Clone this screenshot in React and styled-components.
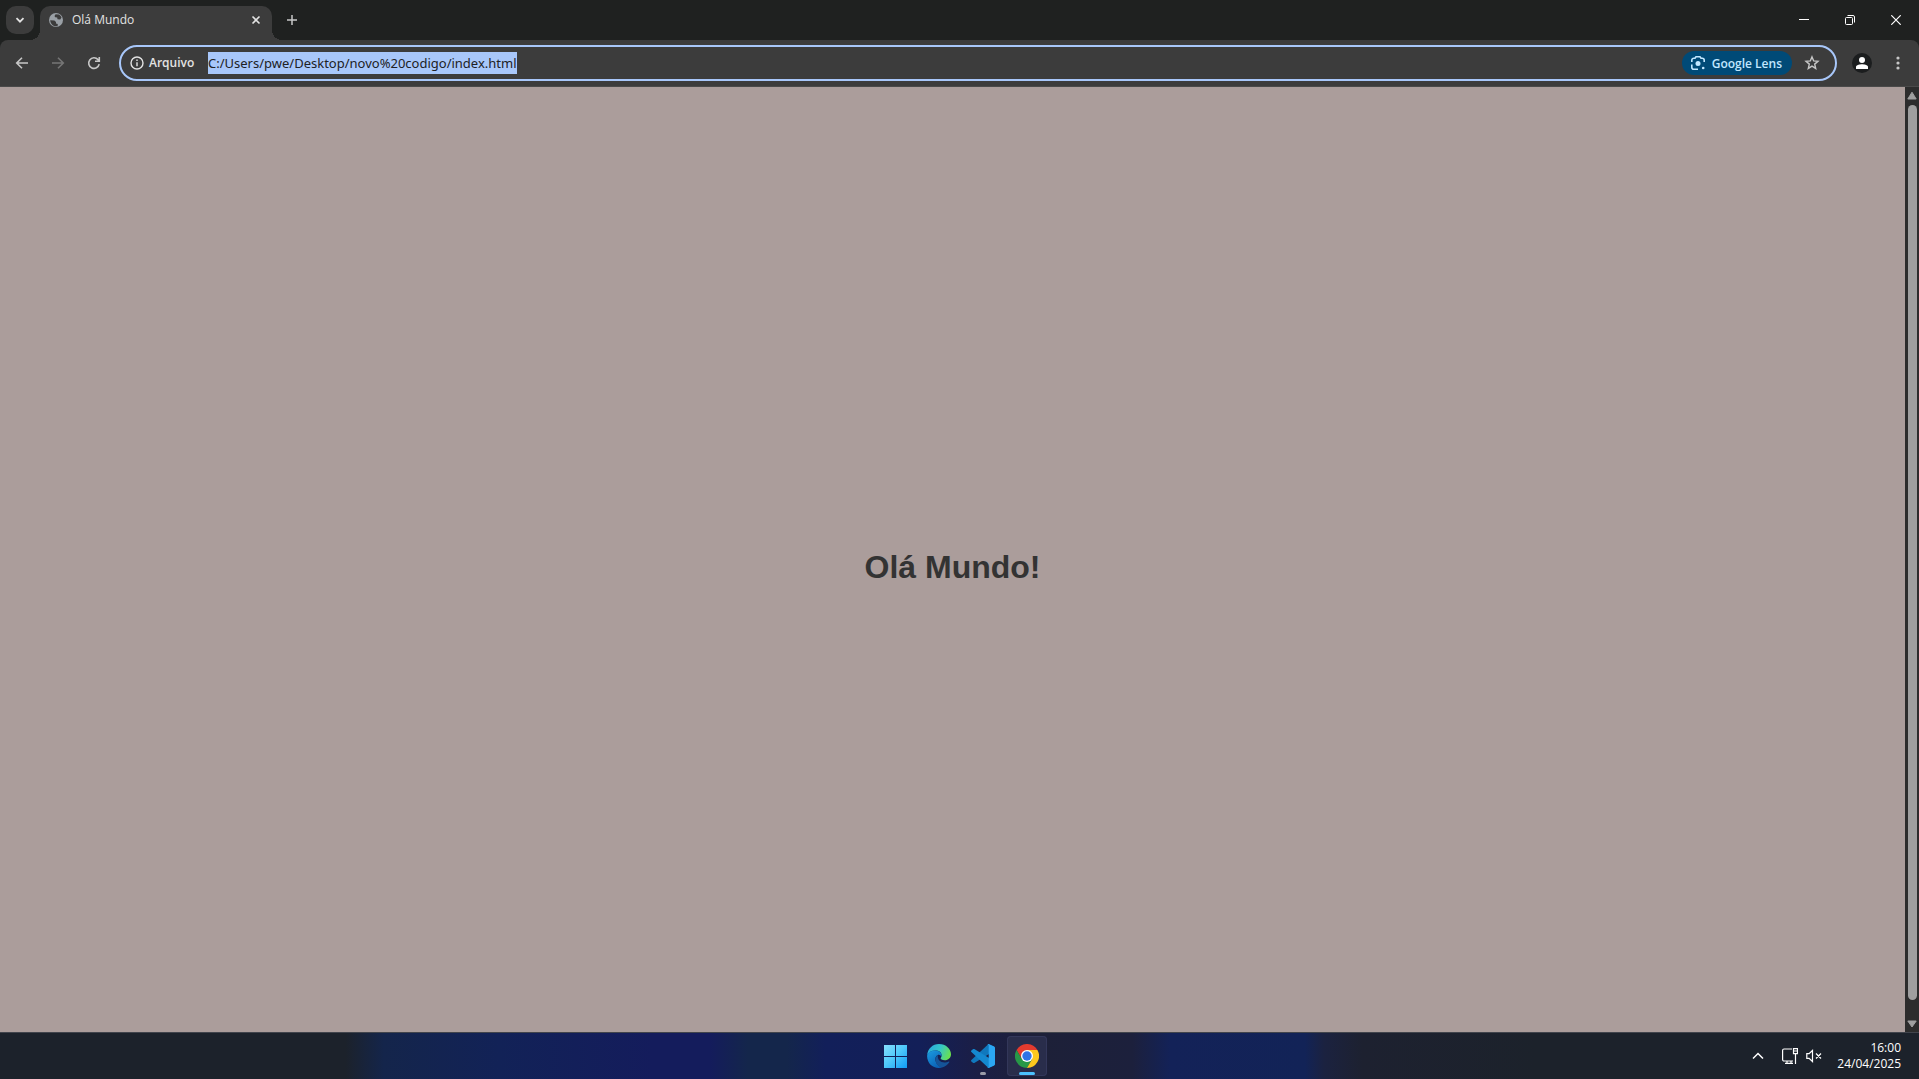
import React from "react";
import styled, { createGlobalStyle } from "styled-components";

const Global = createGlobalStyle`
  *, *::before, *::after { box-sizing: border-box; }
  html, body, #root { height: 100%; margin: 0; }
  body { background: #1f2120; overflow: hidden; font-family: "Open Sans", "Noto Sans", sans-serif; }
  button, input { font: inherit; color: inherit; margin: 0; padding: 0; border: 0; background: none; }
`;

const Desktop = styled.div`
  display: flex;
  flex-direction: column;
  height: 100vh;
`;

const TabStrip = styled.header`
  display: flex;
  align-items: flex-end;
  height: 40px;
  padding-left: 6px;
  background: #1f2120;
  color: #e3e3e3;
`;

const TabSearch = styled.button`
  display: grid;
  place-items: center;
  width: 28px;
  height: 28px;
  margin: 0 6px 6px 0;
  border-radius: 10px;
  background: #3c3c3c;
`;

const Tab = styled.div`
  position: relative;
  display: flex;
  align-items: center;
  width: 232px;
  height: 34px;
  padding: 0 8px 6px;
  border-radius: 10px 10px 0 0;
  background: #3c3c3c;

  &::before, &::after {
    content: "";
    position: absolute;
    bottom: 0;
    width: 10px;
    height: 10px;
  }
  &::before { left: -10px; background: radial-gradient(circle at 0 0, transparent 10px, #3c3c3c 10px); }
  &::after { right: -10px; background: radial-gradient(circle at 100% 0, transparent 10px, #3c3c3c 10px); }
`;

const TabTitle = styled.span`
  flex: 1;
  padding-left: 8px;
  font-size: 12px;
  line-height: 18px;
`;

const IconButton = styled.button`
  display: grid;
  place-items: center;
  flex: none;
  width: 28px;
  height: 28px;
  color: ${(p) => p.$color || "#c7c7c7"};
`;

const TabClose = styled(IconButton)`
  width: 16px;
  height: 16px;
  color: #e3e3e3;
`;

const NewTab = styled(IconButton)`
  margin: 0 0 6px 6px;
`;

const WindowControls = styled.div`
  display: flex;
  align-self: stretch;
  margin-left: auto;
`;

const WindowButton = styled.button`
  display: grid;
  place-items: center;
  width: 46px;
  height: 40px;
  color: #fff;
`;

const ToolbarBack = styled.div`
  background: #1f2120;
`;

const Toolbar = styled.nav`
  display: flex;
  align-items: center;
  height: 47px;
  padding: 0 7px 0 8px;
  border-bottom: 1px solid #4a4a4a;
  border-radius: 8px 8px 0 0;
  background: #3c3c3c;
`;

const NavButtons = styled.div`
  display: flex;
  gap: 8px;
  margin-right: 11px;
`;

const AddressBar = styled.div`
  display: flex;
  align-items: center;
  flex: 1;
  height: 36px;
  padding: 0 9px 0 8px;
  border: 2px solid #a8c7fa;
  border-radius: 18px;
  color: #e3e3e3;
`;

const SchemeChip = styled.button`
  display: flex;
  align-items: center;
  gap: 4px;
  width: 79px;
  font-size: 12px;
  font-weight: 600;
  line-height: 18px;
`;

const Address = styled.input`
  field-sizing: content;
  height: 22px;
  outline: 0;
  background: #a8c7fa;
  color: #202124;
  font-family: "Noto Sans", "Open Sans", sans-serif;
  font-size: 13px;
`;

const LensButton = styled.button`
  display: flex;
  align-items: center;
  gap: 6px;
  height: 24px;
  margin-left: auto;
  padding: 0 10px 0 8px;
  border-radius: 12px;
  background: #004a77;
  color: #c2e7ff;
  font-size: 12px;
  font-weight: 600;
  white-space: nowrap;
`;

const Star = styled(IconButton)`
  margin-left: 6px;
`;

const Avatar = styled.button`
  display: grid;
  place-items: center;
  width: 20px;
  height: 20px;
  margin: 0 12px 0 15px;
  border-radius: 50%;
  background: #1b1d1e;
  color: #fff;
`;

const Viewport = styled.div`
  display: flex;
  flex: 1;
  min-height: 0;
`;

const Page = styled.main`
  display: grid;
  place-items: center;
  flex: 1;
  padding-top: 14px;
  background: #ab9d9b;
`;

const Greeting = styled.h1`
  margin: 0;
  color: #333;
  font: bold 32px/36px "Liberation Sans", Arial, sans-serif;
`;

const ScrollBar = styled.div`
  display: flex;
  flex-direction: column;
  align-items: center;
  width: 14px;
  background: #2c2c2c;
`;

const ScrollArrow = styled.button`
  display: grid;
  place-items: center;
  width: 14px;
  height: 18px;
  color: #9f9f9f;
`;

const ScrollThumb = styled.div`
  flex: 1;
  width: 9px;
  margin-bottom: 14px;
  border-radius: 5px;
  background: #9f9f9f;
`;

const Taskbar = styled.footer`
  display: grid;
  grid-template-columns: 1fr auto 1fr;
  align-items: center;
  height: 47px;
  padding-left: 2px;
  border-top: 1px solid #41444c;
  color: #fff;
  background: linear-gradient(90deg,
    #1c222b 0%, #1c222b 18%, #14254b 20%, #122257 26%, #141c5c 34%, #141c5c 37%,
    #14264b 39%, #14264b 41%, #121f5a 43%, #131f58 48%, #1b1e45 51%, #1d2038 54%, #1c203c 59%,
    #132258 61%, #122357 68%, #1b2240 69%, #1d2130 71%, #1c222b 80%, #1c222b 100%);
`;

const Apps = styled.div`
  display: flex;
  gap: 4px;
  grid-column: 2;
`;

const AppButton = styled.button`
  position: relative;
  display: grid;
  place-items: center;
  width: 40px;
  height: 40px;
  border-radius: 4px;
  background: ${(p) => (p.$active ? "#292d4b" : "none")};
  box-shadow: ${(p) => (p.$active ? "inset 0 0 0 1px #33375a" : "none")};

  &::after {
    content: "";
    position: absolute;
    bottom: 1px;
    width: ${(p) => (p.$active ? 16 : p.$running ? 6 : 0)}px;
    height: 3px;
    border-radius: 2px;
    background: ${(p) => (p.$active ? "#4cc2ff" : "#9a9ba8")};
  }
`;

const Tray = styled.div`
  display: flex;
  align-items: center;
  justify-self: end;
  padding-right: 18px;
`;

const TrayButton = styled.button`
  display: grid;
  place-items: center;
  width: ${(p) => p.$w || 24}px;
  height: 32px;
`;

const Clock = styled.time`
  width: 75px;
  font-size: 12px;
  line-height: 16px;
  text-align: right;
`;

const Svg = ({ w = 16, h = w, sw = 1.5, children }) => (
  <svg width={w} height={h} viewBox={`0 0 ${w} ${h}`} fill="none" stroke="currentColor" strokeWidth={sw} aria-hidden="true">
    {children}
  </svg>
);

const Globe = () => (
  <Svg w={16} sw={0}>
    <circle cx="8" cy="8" r="7" fill="#9aa0a6" />
    <path d="M2.2 8.2 6.4 8.4 8 10v1.6l1.8.4-.2 2.2C6 14.8 2.4 12.3 2.2 8.2zM7.6 2.2 11 2.5c1.2.8 2 1.8 2.5 3l-1.3 2-2.7-.2-.3-1.7-2-.3-.7-1.2z" fill="#3c3c3c" />
  </Svg>
);

const EdgeLogo = () => (
  <svg width="24" height="24" viewBox="0 0 24 24" aria-hidden="true">
    <defs>
      <linearGradient id="edgeTop" x1="0" y1="0.3" x2="1" y2="0.6">
        <stop offset="0" stopColor="#28a9dd" /><stop offset="0.5" stopColor="#35c6c8" /><stop offset="1" stopColor="#6be24b" />
      </linearGradient>
      <linearGradient id="edgeLow" x1="0" y1="0" x2="0.6" y2="1">
        <stop offset="0" stopColor="#1b9de2" /><stop offset="1" stopColor="#0b62b6" />
      </linearGradient>
    </defs>
    <path d="M.2 11C.8 4.7 5.5 0 12 0c7 0 12 5 12 10.2 0 3.6-2.8 6-6.2 6-2.8 0-4.2-.9-4.2-1.9 0-.7 1-1.2 1-2.9C14.6 8.5 12 6.6 8.5 6.6 4.5 6.6 1.5 8.6.2 11z" fill="url(#edgeTop)" />
    <path d="M.1 12C.3 8.7 3.7 6.4 8 6.4c4 0 6.6 2.2 6.6 5 0 .5-.1 1-.3 1.4-.5-1.5-1.7-2.4-3.1-2-2.3.7-3.3 3.5-2.7 6 .8 3.4 3.7 6 6.5 6.7C7.5 25.600.1 20.300.1 12z" fill="url(#edgeLow)" />
    <path d="M11 10.9c-2 .9-3 3.5-2.5 6 .8 3.3 3.6 6 6.5 6.6 3-.8 5.7-2.7 7.3-5.3.3-.5-.1-.8-.6-.6-1.2.6-2.5.8-3.9.8-4.7 0-7.7-3-6.8-7.500z" fill="#155498" />
  </svg>
);

const CodeLogo = () => (
  <svg width="24" height="24" viewBox="0 0 24 24" aria-hidden="true">
    <path d="M17.5 0 23 2.5V7L3.3 18.900c-.4.3-1 .3-1.4-.1L.4 17.4c-.5-.4-.5-1.1 0-1.500z" fill="#1078bd" />
    <path d="M17.5 24 23 21.500V17L3.3 5.100c-.4-.3-1-.3-1.4.1L.4 6.600c-.5.4-.5 1.100 0 1.500z" fill="#1488d0" />
    <path d="M17.5 24c-.6 0-1-.3-1.3-.6.7.5 1.5.1 1.5-.7V1.300c0-.8-.8-1.200-1.500-.7.3-.3.7-.6 1.300-.6l5.600 2.400c.6.3.9.800.9 1.400v16.400c0 .6-.3 1.100-.9 1.400z" fill="#2ba6f2" />
  </svg>
);

const ChromeLogo = () => (
  <svg width="24" height="24" viewBox="0 0 24 24" aria-hidden="true">
    <path d="M12 6h10.4A12 12 0 0 0 1.6 6l5.2 9z" fill="#e33b2e" />
    <path d="M6.8 15 1.6 6A12 12 0 0 0 12 24l5.2-9z" fill="#279847" />
    <path d="M17.2 15 12 24A12 12 0 0 0 22.4 6H12z" fill="#fcc81d" />
    <circle cx="12" cy="12" r="6" fill="#fff" />
    <circle cx="12" cy="12" r="4.7" fill="#2f73e6" />
  </svg>
);

const WindowsLogo = () => (
  <svg width="24" height="24" viewBox="0 0 24 24" aria-hidden="true">
    <defs>
      <linearGradient id="win" gradientUnits="userSpaceOnUse" x1="0" y1="0" x2="24" y2="24">
        <stop offset="0" stopColor="#8ce0fc" /><stop offset="0.5" stopColor="#4fc9fb" /><stop offset="1" stopColor="#109bf6" />
      </linearGradient>
    </defs>
    <path d="M1 1h11v11H1zM13 1h11v11H13zM1 13h11v11H1zM13 13h11v11H13z" fill="url(#win)" />
  </svg>
);

const BrowserTabs = () => (
  <TabStrip>
    <TabSearch aria-label="Pesquisar guias">
      <Svg w={10} sw={1.8}><path d="m1.5 3.2 3.5 3.5 3.5-3.5" /></Svg>
    </TabSearch>
    <Tab>
      <Globe />
      <TabTitle>Olá Mundo</TabTitle>
      <TabClose aria-label="Fechar guia"><Svg w={10} sw={1.6}><path d="m1.5 1.5 7 7m0-7-7 7" /></Svg></TabClose>
    </Tab>
    <NewTab aria-label="Nova guia"><Svg w={12} sw={1.5}><path d="M6 1v10M1 6h10" /></Svg></NewTab>
    <WindowControls>
      <WindowButton aria-label="Minimizar"><Svg w={10} sw={1}><path d="M0 4.5h10" /></Svg></WindowButton>
      <WindowButton aria-label="Restaurar">
        <Svg w={10} sw={1}><rect x=".5" y="2.5" width="7" height="7" rx="1" /><path d="M2.500.5H8A1.500 1.500 0 0 1 9.500 2v5.500" /></Svg>
      </WindowButton>
      <WindowButton aria-label="Fechar"><Svg w={10} sw={1.2}><path d="m.3.3 9.400 9.400m0-9.400L.3 9.700" /></Svg></WindowButton>
    </WindowControls>
  </TabStrip>
);

const BrowserToolbar = () => (
  <ToolbarBack>
    <Toolbar>
      <NavButtons>
        <IconButton aria-label="Voltar"><Svg sw={1.6}><path d="M14 8H3M8 2.7 2.7 8 8 13.3" /></Svg></IconButton>
        <IconButton $color="#757575" aria-label="Avançar"><Svg sw={1.6}><path d="M2 8h11M8 2.7 13.3 8 8 13.3" /></Svg></IconButton>
        <IconButton aria-label="Recarregar">
          <Svg sw={1.6}><path d="M13.2 9.2A5.3 5.3 0 1 1 12 4.6l1 1.200M13.3 2v4.300H9" /></Svg>
        </IconButton>
      </NavButtons>
      <AddressBar>
        <SchemeChip>
          <Svg sw={1.4}><circle cx="8" cy="8" r="6" /><path d="M8 7.200v4M8 4.600v1.500" /></Svg>
          Arquivo
        </SchemeChip>
        <Address aria-label="Endereço" defaultValue="C:/Users/pwe/Desktop/novo%20codigo/index.html" spellCheck={false} />
        <LensButton>
          <Svg sw={1.6}>
            <path d="M1.800 7V5.200a2 2 0 0 1 2-2h1.200l1-1.400h4l1 1.400h1.200a2 2 0 0 1 2 2V7M1.800 9.500v2.700a2 2 0 0 0 2 2H8" />
            <circle cx="8" cy="8.500" r="2.500" fill="currentColor" stroke="none" />
            <circle cx="13.200" cy="13" r="1.300" fill="currentColor" stroke="none" />
          </Svg>
          Google Lens
        </LensButton>
        <Star aria-label="Favoritos">
          <Svg sw={1.4}><path d="m8 1.900 1.700 4 4.300.4-3.300 2.800 1 4.300L8 11.100l-3.700 2.300 1-4.300L2 6.300l4.300-.4z" /></Svg>
        </Star>
      </AddressBar>
      <Avatar aria-label="Perfil">
        <Svg w={12} sw={0}><circle cx="6" cy="3" r="3" fill="currentColor" /><path d="M0 12V9.800C0 8 3.500 7.200 6 7.200s6 .8 6 2.600V12z" fill="currentColor" /></Svg>
      </Avatar>
      <IconButton aria-label="Menu">
        <Svg sw={0}><g fill="currentColor"><circle cx="8" cy="3" r="1.600" /><circle cx="8" cy="8" r="1.600" /><circle cx="8" cy="13" r="1.600" /></g></Svg>
      </IconButton>
    </Toolbar>
  </ToolbarBack>
);

const SystemTaskbar = () => (
  <Taskbar>
    <Apps>
      <AppButton aria-label="Iniciar"><WindowsLogo /></AppButton>
      <AppButton aria-label="Microsoft Edge"><EdgeLogo /></AppButton>
      <AppButton $running aria-label="Visual Studio Code"><CodeLogo /></AppButton>
      <AppButton $active aria-label="Google Chrome"><ChromeLogo /></AppButton>
    </Apps>
    <Tray>
      <TrayButton $w={40} aria-label="Ícones ocultos"><Svg w={12}><path d="M1 8.500 6 3.500l5 5" /></Svg></TrayButton>
      <TrayButton aria-label="Rede">
        <Svg w={16} sw={1.2}>
          <path d="M10 1H2A1.400 1.400 0 0 0 .6 2.400v9.200A1.400 1.400 0 0 0 2 13h9M5 13v2.300m4-2.300v2.300M3 15.400h8M11.500.6h4v5h-4zM11.500 3h4M13.500 5.600V16" />
        </Svg>
      </TrayButton>
      <TrayButton aria-label="Volume">
        <Svg w={16} sw={1.2}><path d="M.8 5.700h2.300L6.500 2.500v11L3.100 10.300H.8zM10 5.500l5 5m0-5-5 5" /></Svg>
      </TrayButton>
      <Clock>16:00<br />24/04/2025</Clock>
    </Tray>
  </Taskbar>
);

export default function App() {
  return (
    <Desktop>
      <Global />
      <BrowserTabs />
      <BrowserToolbar />
      <Viewport>
        <Page><Greeting>Olá Mundo!</Greeting></Page>
        <ScrollBar>
          <ScrollArrow aria-label="Rolar para cima">
            <Svg w={10} sw={1}><path d="M5 1.200 9.200 8H.8z" fill="currentColor" strokeLinejoin="round" /></Svg>
          </ScrollArrow>
          <ScrollThumb />
          <ScrollArrow aria-label="Rolar para baixo">
            <Svg w={10} sw={1}><path d="M5 9 .8 3h8.400z" fill="currentColor" strokeLinejoin="round" /></Svg>
          </ScrollArrow>
        </ScrollBar>
      </Viewport>
      <SystemTaskbar />
    </Desktop>
  );
}
